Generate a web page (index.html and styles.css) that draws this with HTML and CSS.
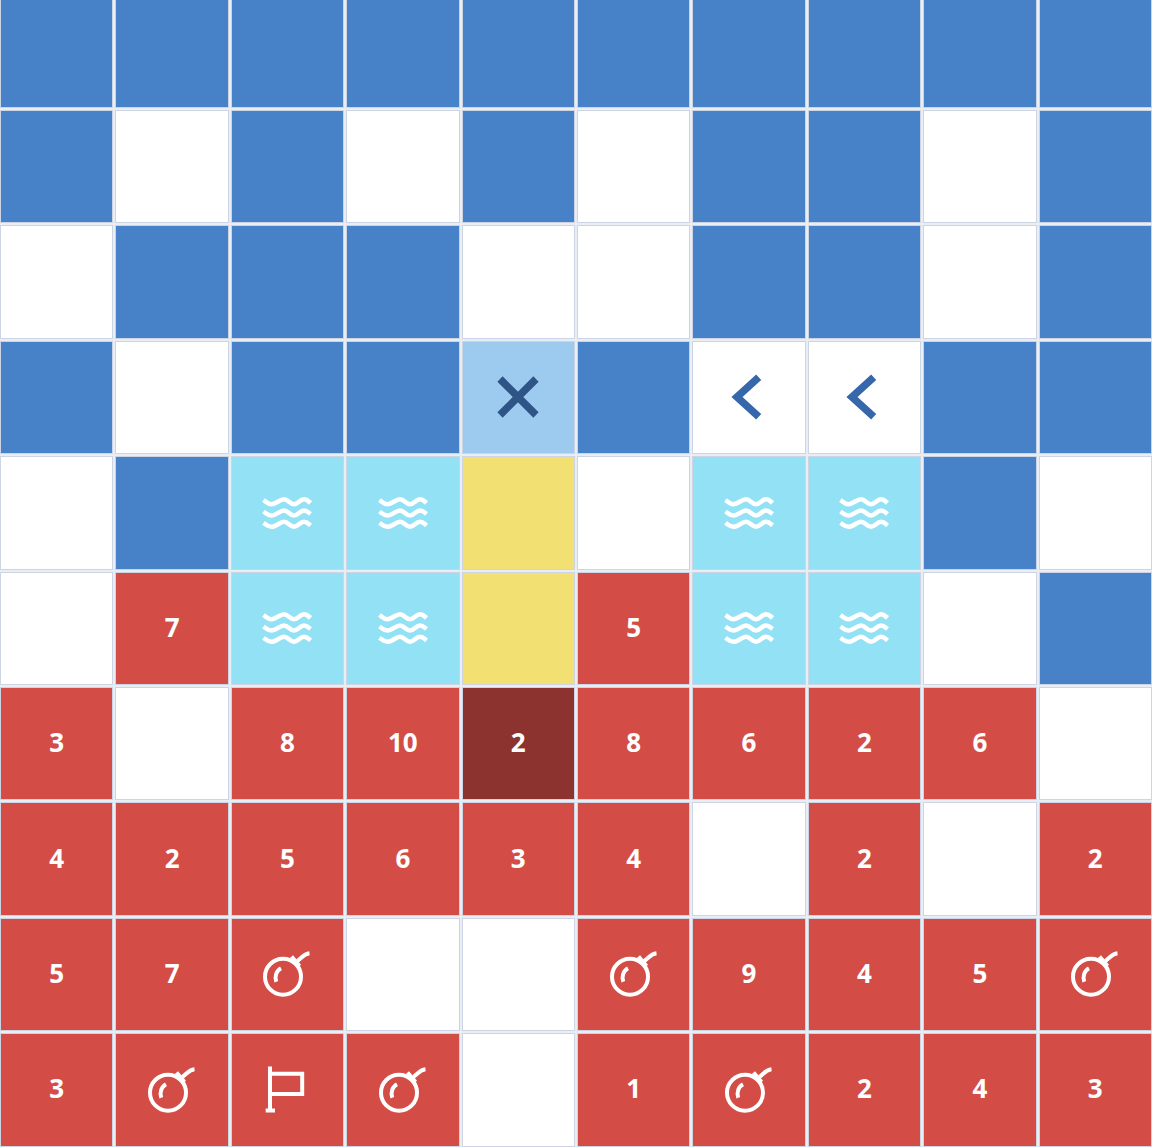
FILE: index.html
```html
<!DOCTYPE html>
<html lang="en">
<head>
<meta charset="utf-8">
<title>Board</title>
<link rel="stylesheet" href="styles.css">
</head>
<body>
<svg class="defs" width="0" height="0" aria-hidden="true">
  <symbol id="i-x" viewBox="-30 -30 60 60"><path class="st st-x" d="M-18 -18L18 18M18 -18L-18 18"/></symbol>
  <symbol id="i-chev" viewBox="-30 -30 60 60"><path class="st st-chev" d="M9.700 -19.700L-12 0L9.700 19.700"/></symbol>
  <symbol id="i-wave" viewBox="-30 -30 60 60"><g class="st st-wave">
    <path d="M-23.500 -13C-20 -10.500 -19 -8.800 -15.500 -8.800C-11 -8.800 -7 -13.800 -3 -13.800C1 -13.800 3 -8.800 7 -8.800C11 -8.800 13 -13.800 17 -13.800C20 -13.800 21 -12.300 23.500 -10"/>
    <path d="M-23.500 -1.500C-20 1 -19 2.500 -15.500 2.500C-11 2.500 -7 -2.500 -3 -2.500C1 -2.500 3 2.500 7 2.500C11 2.500 13 -2.500 17 -2.500C20 -2.500 21 -1 23.500 1"/>
    <path d="M-23.500 9.800C-20 12.300 -19 13.800 -15.500 13.800C-11 13.800 -7 8.800 -3 8.800C1 8.800 3 13.800 7 13.800C11 13.800 13 8.800 17 8.800C20 8.800 21 10.300 23.500 12.500"/>
  </g></symbol>
  <symbol id="i-bomb" viewBox="-30 -30 60 60"><g class="st st-line">
    <circle cx="-4" cy="2.700" r="18"/>
    <path d="M-10.700 7.700C-12.500 3 -11 -3 -6 -5.700"/>
    <path d="M4.500 -17.500L12.500 -8"/>
    <path d="M10 -13C14 -15 16 -20 22.500 -20.700"/>
  </g></symbol>
  <symbol id="i-flag" viewBox="-30 -30 60 60"><g class="st st-line">
    <path d="M-17 -23.500V22"/>
    <path d="M-21.300 20.500H-12"/>
    <path d="M-17 -16.300H15.200V4H-17"/>
  </g></symbol>
</svg>
<main class="board">
  <div class="cell b"></div><div class="cell b"></div><div class="cell b"></div><div class="cell b"></div><div class="cell b"></div><div class="cell b"></div><div class="cell b"></div><div class="cell b"></div><div class="cell b"></div><div class="cell b"></div>

  <div class="cell b"></div><div class="cell"></div><div class="cell b"></div><div class="cell"></div><div class="cell b"></div><div class="cell"></div><div class="cell b"></div><div class="cell b"></div><div class="cell"></div><div class="cell b"></div>

  <div class="cell"></div><div class="cell b"></div><div class="cell b"></div><div class="cell b"></div><div class="cell"></div><div class="cell"></div><div class="cell b"></div><div class="cell b"></div><div class="cell"></div><div class="cell b"></div>

  <div class="cell b"></div><div class="cell"></div><div class="cell b"></div><div class="cell b"></div>
  <div class="cell lb"><svg class="icon"><use href="#i-x"/></svg></div>
  <div class="cell b"></div>
  <div class="cell"><svg class="icon"><use href="#i-chev"/></svg></div>
  <div class="cell"><svg class="icon"><use href="#i-chev"/></svg></div>
  <div class="cell b"></div><div class="cell b"></div>

  <div class="cell"></div><div class="cell b"></div>
  <div class="cell w"><svg class="icon"><use href="#i-wave"/></svg></div>
  <div class="cell w"><svg class="icon"><use href="#i-wave"/></svg></div>
  <div class="cell y"></div><div class="cell"></div>
  <div class="cell w"><svg class="icon"><use href="#i-wave"/></svg></div>
  <div class="cell w"><svg class="icon"><use href="#i-wave"/></svg></div>
  <div class="cell b"></div><div class="cell"></div>

  <div class="cell"></div><div class="cell r">7</div>
  <div class="cell w"><svg class="icon"><use href="#i-wave"/></svg></div>
  <div class="cell w"><svg class="icon"><use href="#i-wave"/></svg></div>
  <div class="cell y"></div><div class="cell r">5</div>
  <div class="cell w"><svg class="icon"><use href="#i-wave"/></svg></div>
  <div class="cell w"><svg class="icon"><use href="#i-wave"/></svg></div>
  <div class="cell"></div><div class="cell b"></div>

  <div class="cell r">3</div><div class="cell"></div><div class="cell r">8</div><div class="cell r">10</div><div class="cell d">2</div><div class="cell r">8</div><div class="cell r">6</div><div class="cell r">2</div><div class="cell r">6</div><div class="cell"></div>

  <div class="cell r">4</div><div class="cell r">2</div><div class="cell r">5</div><div class="cell r">6</div><div class="cell r">3</div><div class="cell r">4</div><div class="cell"></div><div class="cell r">2</div><div class="cell"></div><div class="cell r">2</div>

  <div class="cell r">5</div><div class="cell r">7</div>
  <div class="cell r"><svg class="icon"><use href="#i-bomb"/></svg></div>
  <div class="cell"></div><div class="cell"></div>
  <div class="cell r"><svg class="icon"><use href="#i-bomb"/></svg></div>
  <div class="cell r">9</div><div class="cell r">4</div><div class="cell r">5</div>
  <div class="cell r"><svg class="icon"><use href="#i-bomb"/></svg></div>

  <div class="cell r">3</div>
  <div class="cell r"><svg class="icon"><use href="#i-bomb"/></svg></div>
  <div class="cell r"><svg class="icon"><use href="#i-flag"/></svg></div>
  <div class="cell r"><svg class="icon"><use href="#i-bomb"/></svg></div>
  <div class="cell"></div>
  <div class="cell r">1</div>
  <div class="cell r"><svg class="icon"><use href="#i-bomb"/></svg></div>
  <div class="cell r">2</div><div class="cell r">4</div><div class="cell r">3</div>
</main>
</body>
</html>
```
FILE: styles.css
```css
html, body {
  margin: 0;
  padding: 0;
  height: 100%;
  overflow: hidden;
  background: #fff;
}

.defs {
  display: block;
  height: 0;
}

.board {
  display: grid;
  grid-template-columns: repeat(10, 113.4px);
  grid-auto-rows: 113.4px;
  gap: 2px;
  margin-top: -5.4px;
  width: 1152px;
  background: #e9edf4;
  font-family: "Open Sans", "Liberation Sans", sans-serif;
  font-size: 26px;
  font-weight: 700;
  color: #fff;
}

.cell {
  box-sizing: border-box;
  display: flex;
  align-items: center;
  justify-content: center;
  padding-bottom: 3px;
  background: #fff;
  border: 1px solid #cdd5e4;
}

.b { background: #4782c8; }
.lb { background: #9dcbf0; }
.y { background: #f2e072; }
.w { background: #92e1f5; }
.r { background: #d34d46; }
.d { background: #8c3330; }

.icon {
  flex: none;
  width: 60px;
  height: 60px;
  margin-bottom: -3px;
  overflow: visible;
}

.st {
  fill: none;
  stroke: #fff;
}

.st-x { stroke: #2f5587; stroke-width: 7.5; }
.st-chev { stroke: #3567aa; stroke-width: 7.5; }
.st-wave { stroke-width: 4.6; }
.st-line { stroke-width: 4; }
```
